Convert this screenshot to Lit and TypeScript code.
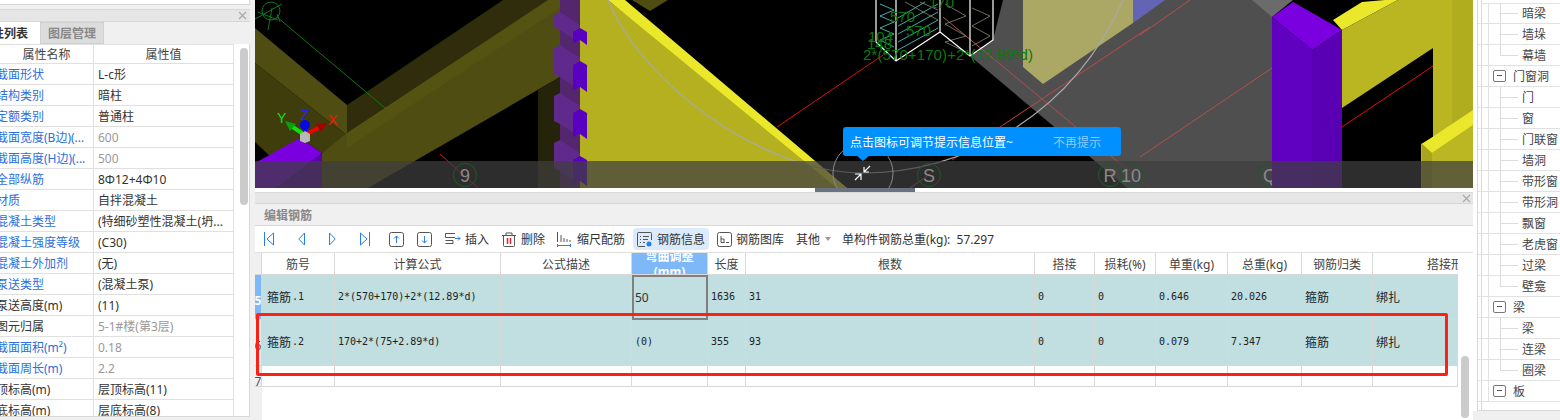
import { LitElement, html, css, svg } from 'lit';
import { customElement } from 'lit/decorators.js';
import { classMap } from 'lit/directives/class-map.js';

type Prop = { name: string; value: string; tone?: 'link' | 'plain'; muted?: boolean };

const PROPS: Prop[] = [
  { name: '截面形状', value: 'L-c形', tone: 'link' },
  { name: '结构类别', value: '暗柱', tone: 'link' },
  { name: '定额类别', value: '普通柱', tone: 'link' },
  { name: '截面宽度(B边)(...', value: '600', tone: 'link', muted: true },
  { name: '截面高度(H边)(...', value: '500', tone: 'link', muted: true },
  { name: '全部纵筋', value: '8Φ12+4Φ10', tone: 'link' },
  { name: '材质', value: '自拌混凝土', tone: 'link' },
  { name: '混凝土类型', value: '(特细砂塑性混凝土(坍...', tone: 'link' },
  { name: '混凝土强度等级', value: '(C30)', tone: 'link' },
  { name: '混凝土外加剂', value: '(无)', tone: 'link' },
  { name: '泵送类型', value: '(混凝土泵)', tone: 'link' },
  { name: '泵送高度(m)', value: '(11)' },
  { name: '图元归属', value: '5-1#楼(第3层)', muted: true },
  { name: '截面面积(m²)', value: '0.18', tone: 'link', muted: true },
  { name: '截面周长(m)', value: '2.2', tone: 'link', muted: true },
  { name: '顶标高(m)', value: '层顶标高(11)' },
  { name: '底标高(m)', value: '层底标高(8)' },
];

const TREE: { label: string; group?: boolean; last?: boolean }[] = [
  { label: '暗梁' }, { label: '墙垛' }, { label: '幕墙', last: true },
  { label: '门窗洞', group: true },
  { label: '门' }, { label: '窗' }, { label: '门联窗' }, { label: '墙洞' },
  { label: '带形窗' }, { label: '带形洞' }, { label: '飘窗' }, { label: '老虎窗' },
  { label: '过梁' }, { label: '壁龛', last: true },
  { label: '梁', group: true },
  { label: '梁' }, { label: '连梁' }, { label: '圈梁', last: true },
  { label: '板', group: true },
];

const HEADERS = ['', '筋号', '计算公式', '公式描述', '弯曲调整(mm)', '长度', '根数', '搭接', '损耗(%)', '单重(kg)', '总重(kg)', '钢筋归类', '搭接形'];

const ROWS = [
  ['5', '箍筋.1', '2*(570+170)+2*(12.89*d)', '', '50', '1636', '31', '0', '0', '0.646', '20.026', '箍筋', '绑扎'],
  ['6', '箍筋.2', '170+2*(75+2.89*d)', '', '(0)', '355', '93', '0', '0', '0.079', '7.347', '箍筋', '绑扎'],
  ['7', '', '', '', '', '', '', '', '', '', '', '', ''],
];

const poly = (points: string, fill: string) => svg`<polygon points=${points} fill=${fill}></polygon>`;
const line = (x1: number, y1: number, x2: number, y2: number, stroke: string, w = 1) =>
  svg`<line x1=${x1} y1=${y1} x2=${x2} y2=${y2} stroke=${stroke} stroke-width=${w}></line>`;

// notches on the purple column: [top, bottom]
const NOTCHES = [[12, 43], [45, 90], [93, 137], [140, 184]];

// axis bubbles along the bottom of the view
const AXES = [
  { x: 465, label: '9' }, { x: 929, label: 'S' }, { x: 1110, label: 'R' }, { x: 1131, label: '10' }, { x: 1270, label: 'Q' },
];

@customElement('app-root')
export class AppRoot extends LitElement {
  static styles = css`
    :host {
      display: block;
      width: 1560px;
      height: 420px;
      overflow: hidden;
      background: #f0f0f0;
      color: #333;
      font: 12px 'Noto Sans', 'Noto Sans CJK SC', sans-serif;
    }
    .app { display: flex; height: 420px; }

    /* left properties panel */
    .left { width: 250px; flex: none; display: flex; flex-direction: column; height: 416px; overflow: hidden; border-bottom: 1px solid #d8d8d8; box-sizing: content-box; }
    .left-top { height: 4px; background: #fff; border-bottom: 1px solid #d8d8d8; border-right: 1px solid #d8d8d8; flex: none; }
    .left-gap { height: 4px; flex: none; }
    .titlebar { height: 11px; flex: none; background: #e6e6e6; border-top: 1px solid #d8d8d8; border-bottom: 1px solid #d8d8d8; display: flex; justify-content: flex-end; align-items: center; padding-right: 3px; }
    .close { width: 9px; height: 9px; display: block; }
    .tabs { height: 22px; flex: none; display: flex; background: #f0f0f0; margin-left: -20px; }
    .tab { padding: 0 4px 0 0; width: 56px; display: flex; align-items: center; font-weight: 700; color: #333; background: #fff; font-size: 12px; }
    .tab.off { width: 64px; justify-content: center; padding: 0; background: #dcdcdc; color: #888; border: 1px solid #d0d0d0; box-sizing: border-box; margin-left: 0; }
    .prop-body { flex: 1; display: flex; background: #fff; border-right: 1px solid #d8d8d8; min-height: 0; }
    .prop-table { width: 233px; flex: none; border-right: 1px solid #e2e2e2; overflow: hidden; }
    .prop-row { display: grid; grid-template-columns: 94px 139px; height: 21px; box-sizing: border-box; border-bottom: 1px solid #e0e0e0; align-items: center; }
    .prop-row.head { height: 20px; border-top: 1px solid #e0e0e0; text-align: center; color: #444; }
    .prop-row > span { white-space: nowrap; height: 100%; line-height: 22px; box-sizing: border-box; }
    .prop-row.head > span { line-height: 20px; }
    .prop-row > span:first-child { border-right: 1px solid #e0e0e0; overflow: hidden; }
    .prop-row:not(.head) > span:first-child { text-indent: -4px; }
    .prop-row:not(.head) > span:last-child { padding-left: 4px; overflow: hidden; }
    .link { color: #2b6fe0; }
    .muted { color: #999; }
    .prop-scroll { flex: 1; position: relative; padding: 4px 3px 0 6px; }
    .prop-thumb { width: 8px; height: 157px; border-radius: 4px; background: #cbcbcb; }

    /* centre column */
    .center { width: 1218px; margin-left: 5px; flex: none; display: flex; flex-direction: column; }
    .view { position: relative; height: 188px; flex: none; background: #000; overflow: hidden; }
    .view svg { display: block; }
    .tip { position: absolute; left: 588px; top: 127px; width: 278px; height: 29px; background: #0090ff; border-radius: 3px; color: #fff; display: flex; align-items: center; justify-content: space-between; box-sizing: border-box; padding: 0 20px 0 7px; }
    .tip::after { content: ''; position: absolute; left: 14px; top: 29px; border: 6px solid transparent; border-top: 5px solid #0090ff; border-bottom: 0; }
    .tip-off { color: #8ccbff; }
    .strip { position: relative; height: 4px; flex: none; background: #fff; }
    .handle { position: absolute; left: 560px; top: 0; width: 100px; height: 4px; background: #6a7380; }
    .panel-bar { height: 10px; flex: none; background: #e6e6e6; border-top: 1px solid #d8d8d8; border-bottom: 1px solid #d8d8d8; display: flex; justify-content: flex-end; align-items: center; padding-right: 2px; }
    .panel-head { height: 21px; flex: none; background: #f0f0f0; border-bottom: 1px solid #d8d8d8; color: #888; font-weight: 700; display: flex; align-items: center; padding-left: 9px; }

    .toolbar { height: 27px; flex: none; background: #fff; display: flex; align-items: center; padding-left: 9px; border-bottom: 1px solid #e0e0e0; box-sizing: border-box; white-space: nowrap; color: #333; }
    .tool { display: flex; align-items: center; flex: none; }
    .nav { display: flex; gap: 24px; align-items: center; }
    .boxes { display: flex; gap: 13px; align-items: center; margin-left: 19px; margin-right: 13px; }
    .tool svg { display: block; flex: none; }
    .tool span { margin-left: 4px; }
    .del { margin-left: 13px; }
    .del span { margin-left: 5px; }
    .scale { margin-left: 12px; }
    .scale span { margin-left: 6px; }
    .info { margin-left: 8px; height: 22px; width: 76px; background: #dcebfb; border-radius: 4px; padding-left: 4px; box-sizing: border-box; }
    .info span { margin-left: 5px; }
    .lib { margin-left: 8px; }
    .other { margin-left: 8px; }
    .other i { display: block; margin-left: 5px; border: 3px solid transparent; border-top: 4px solid #999; border-bottom: 0; }
    .total { margin-left: 7px; }

    /* rebar grid */
    .grid-wrap { flex: 1; background: #fff; position: relative; display: flex; }
    .grid { width: 1203px; flex: none; }
    .gutter { position: absolute; left: 0; top: 0; bottom: 0; width: 7px; background: #f0f0f0; }
    .row { position: relative; display: grid; grid-template-columns: 7px 73px 166px 131px 76px 38px 289px 60px 61px 72px 74px 71px 85px; }
    .row.head { height: 22px; color: #444; text-align: center; }
    .row.h46 { height: 45px; background: #c1dee0; }
    .row.h47 { height: 46px; background: #c1dee0; }
    .row.h21 { height: 21px; }
    .cell { position: relative; box-sizing: border-box; border-right: 1px solid #d8d8d8; border-bottom: 1px solid #d8d8d8; display: flex; align-items: center; padding: 0 0 2px 3px; overflow: hidden; white-space: nowrap; min-width: 0; }
    .head .cell { justify-content: center; padding: 0; }
    .head .cell:last-child { justify-content: flex-start; padding-left: 54px; border-right: 0; }
    .cell.num { font: 10px 'DejaVu Sans Mono', 'Liberation Mono', monospace; color: #222; }
    .cell.cjk { font: 12px 'Noto Sans CJK SC', sans-serif; color: #222; }
    .cell.mix { font: 12px 'Noto Sans CJK SC', sans-serif; color: #222; padding-left: 5px; }
    .cell.mix b { font: 10px 'DejaVu Sans Mono', monospace; padding-left: 1px; }
    .cell.sel { outline: 2px solid #808080; outline-offset: -2px; font: 12px 'Noto Sans', sans-serif; padding: 0 0 0 3px; }
    .cell.hsel { background: #7fb8f8; color: #fff; white-space: normal; text-align: center; line-height: 15px; font-weight: 700; align-items: center; }
    .cell.idx { padding: 6px 0 0; justify-content: center; background: #f0f0f0; color: #44546a; font-size: 12px; }
    .cell.idx.cur { background: #7fb8f8; color: #fff; font-weight: 700; }
    .cell.idx.over { padding-top: 11px; }
    .thumb { position: absolute; left: 1206px; top: 0; bottom: 2px; width: 8px; margin-top: 103px; background: #cbcbcb; border-radius: 4px; }
    .mark { position: absolute; left: 1px; top: 60px; width: 1192px; height: 63px; box-sizing: border-box; border: 3px solid #ff2015; border-radius: 2px; pointer-events: none; }

    /* right tree */
    .right { width: 87px; flex: none; background: #fff; display: flex; padding-left: 4px; box-sizing: border-box; height: 411px; }
    .tree { position: relative; flex: 1; border-left: 1px solid #d8d8d8; border-bottom: 1px solid #d8d8d8; overflow: hidden; box-sizing: border-box; }
    .tree::before { content: ''; position: absolute; left: 3px; top: 0; bottom: 0; width: 1px; background: #d8d8d8; }
    .tree-inner { padding-top: 3px; }
    .tree-inner::before { content: ''; position: absolute; left: 3px; right: 0; top: 3px; height: 1px; background: #e2e2e2; }
    .node { position: relative; height: 21px; box-sizing: border-box; border-bottom: 1px solid #e2e2e2; line-height: 21px; padding-left: 44px; color: #444; white-space: nowrap; }
    .node.group { padding-left: 35px; }
    .node::before { content: ''; position: absolute; left: 10px; top: 0; bottom: -1px; width: 1px; background: #e2e2e2; }
    .node:not(.group)::after { content: ''; position: absolute; left: 22px; top: 10px; width: 18px; height: 1px; background: #dcdcdc; }
    .stem { position: absolute; left: 22px; top: 0; bottom: 0; width: 1px; background: #dcdcdc; }
    .node.end .stem { bottom: 10px; }
    .toggle { position: absolute; left: 15px; top: 4px; width: 13px; height: 12px; box-sizing: border-box; border: 1px solid #777; border-radius: 2px; background: #fff; }
    .toggle::after { content: ''; position: absolute; left: 3px; top: 4px; width: 5px; height: 1px; background: #555; }
  `;

  private renderScene() {
    return svg`
      <svg width="1218" height="188" viewBox="255 0 1218 188">
        <defs><clipPath id="slab"><rect x="255" y="0" width="1017" height="188"></rect></clipPath></defs>
        <rect x="255" y="0" width="1218" height="188" fill="#000"></rect>

        <!-- beams on the left -->
        ${poly('255,28 347,105 347,135 327,120 255,63', '#4f4d12')}
        ${poly('255,63 327,120 347,135 322,153 300,138 272,158 255,142', '#3f3d0c')}
        ${poly('347,105 503,0 548,0 347,133', '#2f2d0b')}
        ${poly('347,133 548,0 560,0 560,77 368,188 322,188 322,153', '#4f4d12')}
        ${poly('347,148 560,8 560,0 548,0 347,133', '#555311')}
        ${poly('538,90 560,77 560,188 538,188', '#25240a')}
        ${line(277, 17, 385, 108, '#0a7a0a')}
        ${line(440, 154, 478, 188, '#d01818')}
        <g fill="none" stroke="#0f7a1f" stroke-width="1">
          <path d="M255 19 L282 4 M268 30 L272 8 M277 14 L280 22 M258 12 L278 20"></path>
          <circle cx="271" cy="11" r="9"></circle>
        </g>

        <!-- yellow wall -->
        ${poly('580,0 608,0 847,188 580,188', '#b5b020')}
        ${poly('608,0 625,0 847,188 837,188', '#ebe82c')}
        ${poly('632,0 668,0 650,11', '#4f4d12')}

        <!-- purple column with notches -->
        ${poly('560,0 580,0 580,188 560,188', '#53266e')}
        ${NOTCHES.map(([t, b]) => svg`
          ${poly(`554,${t + 3} 560,${t} 580,${t + 13} 580,${b} 560,${b - 13} 554,${b - 16}`, '#5f2a8c')}
          ${poly(`573,${t + 20} 580,${t + 16} 587,${t + 20} 587,${b + 2} 580,${b - 3} 573,${b}`, '#5a00c0')}
        `)}

        <!-- grey slab and khaki box -->
        ${poly('993,40 1003,0 1272,0 1272,188 1127,188 970,56', '#4f4f4f')}
        ${poly('1023,0 1133,0 1133,23 1043,84 1023,67', '#aaa864')}
        ${poly('1133,0 1165,0 1133,23', '#6464b4')}
        ${poly('1252,0 1293,0 1272,17', '#6b6b6b')}
        ${line(777, 127, 883, 55, '#e01010')}
        ${line(952, 160, 1003, 125, '#e01010')}
        ${line(1003, 125, 1150, 27, '#c04848')}
        ${line(943, 17, 1117, 161, '#a85050')}
        ${line(1140, 35, 1190, 0, '#b05050')}
        ${line(1140, 157, 1272, 68, '#b05050')}
        ${line(910, 188, 930, 174, '#b05050')}
        ${line(1117, 161, 1150, 188, '#a85050')}

        <!-- purple column and yellow frame on the right -->
        ${poly('1293,0 1323,27 1362,0', '#000')}
        ${poly('1272,17 1293,2 1342,30 1312,50', '#7a00e0')}
        ${poly('1272,17 1312,50 1312,188 1272,188', '#6000c0')}
        ${poly('1312,50 1342,30 1342,188 1312,188', '#5a00b4')}
        ${poly('1333,20 1362,2 1385,0 1398,0 1342,30', '#ebe82c')}
        ${poly('1342,30 1398,0 1473,0 1473,188 1342,188', '#b9b622')}
        ${poly('1452,0 1473,0 1473,112 1452,126', '#b0ad1e')}
        ${poly('1342,108 1433,48 1433,137 1421,144 1421,188 1342,188', '#000')}
        ${line(1342, 127, 1433, 66, '#e01010')}
        ${poly('1422,144 1473,110 1473,125 1432,153', '#ebe82c')}
        ${poly('1422,144 1432,153 1432,188 1422,188', '#a8a41e')}
        ${poly('1432,153 1473,125 1473,188 1432,188', '#bab722')}

        <!-- gizmo bottom-left, purple stub -->
        ${poly('300,138 322,153 277,188 255,188 255,163', '#7a00e0')}
        ${poly('322,153 322,188 277,188', '#5a00b0')}
        <g>
          ${line(305, 135, 322, 126, '#f00000', 4)}
          ${poly('316,124 327,123 321,132', '#a80000')}
          ${line(305, 135, 291, 126, '#10e010', 4)}
          ${poly('285,121 296,124 290,131', '#0aa00a')}
          ${line(305, 135, 305, 122, '#1010ff', 4)}
          <circle cx="305" cy="125" r="5" fill="#0808e0"></circle>
          ${poly('300,134 305,131 310,134 310,141 305,143 300,141', '#b8b8b8')}
          <text x="328" y="125" fill="#ff1010" font-size="14" font-family="Liberation Sans">X</text>
          <text x="277" y="123" fill="#10e010" font-size="14" font-family="Liberation Sans">Y</text>
          <text x="301" y="120" fill="#2020ff" font-size="14" font-family="Liberation Sans">Z</text>
        </g>

        <!-- rebar cage wireframe -->
        <g fill="none" stroke="#4fd8d8" stroke-width="0.8">
          <path d="M880 4 L894 10 L880 16 L894 22 L880 28 L894 34 L880 40 L894 47"></path>
          <path d="M898 50 L938 28 M898 42 L938 20 M898 34 L938 12 M898 26 L938 4 M898 18 L925 2"></path>
        </g>
        <g fill="none" stroke="#8a8a72" stroke-width="0.8">
          <path d="M945 4 L966 16 L945 24 L966 36 L945 42 L966 52 M972 8 L990 16 L972 26 L990 36 L972 46"></path>
          <path d="M905 2 L938 20 M920 2 L938 10"></path>
        </g>
        <path d="M876 0 V42 L896 61 L940 32 L970 56 L993 40 V0 M896 0 V61 M940 0 V32 M970 0 V56" fill="none" stroke="#fff" stroke-width="1.2"></path>
        <g fill="#0a7a0a" font-family="Liberation Sans, sans-serif" font-size="15">
          <text x="929" y="8">170</text>
          <text x="890" y="22">570</text>
          <text x="906" y="36">570</text>
          <text x="868" y="42">104</text>
          <text x="867" y="49">148</text>
          <text x="863" y="60" textLength="170">2*(570+170)+2*(12.89*d)</text>
        </g>

        <!-- guide arc -->
        <path d="M608 0 C640 80 760 173 863 173 C960 173 1070 120 1123 0" fill="none" stroke="#a8a8a8" stroke-width="1.2"></path>

        <!-- translucent bottom band -->
        <rect x="255" y="161" width="1218" height="27" fill="rgb(62,62,62)" fill-opacity="0.72"></rect>
        <g clip-path="url(#slab)">
          ${AXES.map(
            (a) => svg`
              <circle cx=${a.x} cy="175" r="11.5" fill="none" stroke="#1f5a2a" stroke-width="1"></circle>
              <text x=${a.x} y="182" fill="#8a8a8a" font-size="18" text-anchor="middle" font-family="Liberation Sans, sans-serif">${a.label}</text>`
          )}
        </g>
        <circle cx="863" cy="173" r="30" fill="none" stroke="#8a8a8a" stroke-width="1"></circle>
        <path d="M870 166 L864 172 M864 167 V172 H869 M855 180 L861 174 M855 174 H861 V180" fill="none" stroke="#fff" stroke-width="1.2"></path>
      </svg>
    `;
  }

  private renderToolbar() {
    const blue = '#2a7de1';
    return html`
      <div class="toolbar">
        <div class="nav">
          <svg width="10" height="14" viewBox="0 0 10 14" fill="none" stroke=${blue}><path d="M.5 0v14M9.5 1 3 7l6.5 6z"></path></svg>
          <svg width="7" height="14" viewBox="0 0 7 14" fill="none" stroke=${blue}><path d="M6.5 1 .8 7l5.7 6z"></path></svg>
          <svg width="7" height="14" viewBox="0 0 7 14" fill="none" stroke=${blue}><path d="M.5 1l5.7 6-5.7 6z"></path></svg>
          <svg width="10" height="14" viewBox="0 0 10 14" fill="none" stroke=${blue}><path d="M9.5 0v14M.5 1 7 7 .5 13z"></path></svg>
        </div>
        <div class="boxes">
          <svg width="15" height="15" viewBox="0 0 15 15" fill="none"><rect x=".5" y=".5" width="14" height="14" rx="2" stroke="#555"></rect><path d="M7.5 11V4M5 6.5 7.5 4 10 6.5" stroke=${blue}></path></svg>
          <svg width="15" height="15" viewBox="0 0 15 15" fill="none"><rect x=".5" y=".5" width="14" height="14" rx="2" stroke="#555"></rect><path d="M7.5 4v7M5 8.5 7.5 11 10 8.5" stroke=${blue}></path></svg>
        </div>
        <div class="tool">
          <svg width="16" height="12" viewBox="0 0 16 12" fill="none"><path d="M10 .5H.5v4H10M.5 7.5H8v3H.5" stroke="#555"></path><path d="M10 5.500h5M13 3.500l2 2-2 2" stroke=${blue}></path></svg>
          <span>插入</span>
        </div>
        <div class="tool del">
          <svg width="14" height="15" viewBox="0 0 14 15" fill="none"><path d="M0 3.500h14M4 3.500V1h6v2.500M1.500 3.500v10a1 1 0 0 0 1 1h9a1 1 0 0 0 1-1v-10" stroke="#555"></path><path d="M5.500 6v6M8.500 6v6" stroke="#e02020" stroke-width="1.500"></path></svg>
          <span>删除</span>
        </div>
        <div class="tool scale">
          <svg width="14" height="15" viewBox="0 0 14 15" fill="none" stroke="#555"><path d="M.5 0v10M4 3v7M7 6v4M10 7v3M13 8v2"></path><path d="M0 13.500h14M.5 12v3M13.500 12v3" stroke=${blue}></path></svg>
          <span>缩尺配筋</span>
        </div>
        <div class="tool info">
          <svg width="15" height="15" viewBox="0 0 15 15" fill="none"><path d="M8 14.500H1.500a1 1 0 0 1-1-1v-12a1 1 0 0 1 1-1h12a1 1 0 0 1 1 1V8M3 4.500h1M6 4.500h6M3 7.500h1M6 7.500h5M3 10.500h1M6 10.500h2" stroke="#555"></path><circle cx="12" cy="12" r="2.500" fill=${blue}></circle></svg>
          <span>钢筋信息</span>
        </div>
        <div class="tool lib">
          <svg width="15" height="15" viewBox="0 0 15 15" fill="none"><rect x=".5" y=".5" width="14" height="14" rx="2" stroke="#555"></rect><path d="M4 4v6.500h3.500M4 7h3v3.500M9 10.500h3" stroke="#555"></path></svg>
          <span>钢筋图库</span>
        </div>
        <div class="tool other"><span>其他</span><i></i></div>
        <div class="tool total"><span>单构件钢筋总重(kg):&nbsp;&nbsp;57.297</span></div>
      </div>
    `;
  }

  private renderGrid() {
    const heights = ['h46', 'h47', 'h21'];
    return html`
      <div class="grid-wrap">
        <div class="gutter"></div>
        <div class="grid">
          <div class="row head">
            ${HEADERS.map(
              (h, i) => html`<div class=${classMap({ cell: true, hsel: i === 4 })}>${h}</div>`
            )}
          </div>
          ${ROWS.map(
            (row, r) => html`
              <div class="row ${heights[r]}">
                ${row.map((v, i) => {
                  const cjk = i === 11 || i === 12;
                  const classes = {
                    cell: true,
                    idx: i === 0,
                    cur: i === 0 && r === 0,
                    over: i === 0 && r === 2,
                    sel: i === 4 && r === 0,
                    mix: i === 1,
                    cjk,
                    num: !cjk && i !== 0 && i !== 1 && !(i === 4 && r === 0),
                  };
                  if (i === 1 && v) {
                    const [word, no] = v.split('.');
                    return html`<div class=${classMap(classes)}>${word}<b>.${no}</b></div>`;
                  }
                  return html`<div class=${classMap(classes)}>${v}</div>`;
                })}
              </div>
            `
          )}
        </div>
        <div class="thumb"></div>
        <div class="mark"></div>
      </div>
    `;
  }

  render() {
    const closeIcon = html`<svg class="close" viewBox="0 0 9 9" fill="none" stroke="#a8a8a8" stroke-width="1.200"><path d="M1 1l7 7M8 1 1 8"></path></svg>`;
    return html`
      <div class="app">
        <div class="left">
          <div class="left-top"></div>
          <div class="left-gap"></div>
          <div class="titlebar">${closeIcon}</div>
          <div class="tabs">
            <div class="tab">属性列表</div>
            <div class="tab off">图层管理</div>
          </div>
          <div class="prop-body">
            <div class="prop-table">
              <div class="prop-row head"><span>属性名称</span><span>属性值</span></div>
              ${PROPS.map(
                (p) => html`
                  <div class="prop-row">
                    <span class=${p.tone === 'link' ? 'link' : ''}>${p.name}</span>
                    <span class=${p.muted ? 'muted' : ''}>${p.value}</span>
                  </div>
                `
              )}
            </div>
            <div class="prop-scroll"><div class="prop-thumb"></div></div>
          </div>
        </div>

        <div class="center">
          <div class="view">
            ${this.renderScene()}
            <div class="tip"><span>点击图标可调节提示信息位置~</span><span class="tip-off">不再提示</span></div>
          </div>
          <div class="strip"><div class="handle"></div></div>
          <div class="panel-bar">${closeIcon}</div>
          <div class="panel-head">编辑钢筋</div>
          ${this.renderToolbar()}
          ${this.renderGrid()}
        </div>

        <div class="right">
          <div class="tree">
            <div class="tree-inner">
              ${TREE.map(
                (n) => html`
                  <div class=${classMap({ node: true, group: !!n.group, end: !!n.last })}>
                    ${n.group ? html`<i class="toggle"></i>` : html`<i class="stem"></i>`}
                    ${n.label}
                  </div>
                `
              )}
            </div>
          </div>
        </div>
      </div>
    `;
  }
}
